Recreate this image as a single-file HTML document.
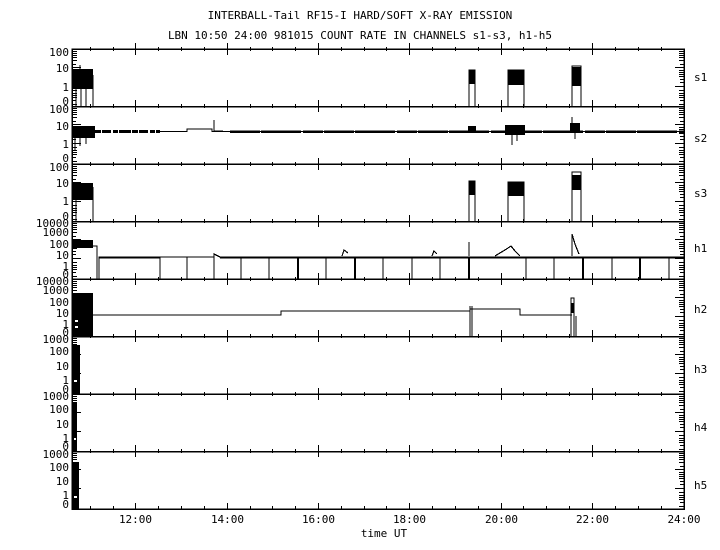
<!DOCTYPE html>
<html><head><style>
html,body{margin:0;padding:0;background:#fff;width:720px;height:550px;overflow:hidden}
svg text{font-family:"DejaVu Sans Mono","Liberation Mono",monospace;font-size:11px;fill:#000}
svg g, svg rect, svg path, svg line{shape-rendering:crispEdges}
</style></head><body>
<svg width="720" height="550" viewBox="0 0 720 550" xmlns="http://www.w3.org/2000/svg">
<text x="360" y="19" text-anchor="middle">INTERBALL-Tail RF15-I HARD/SOFT X-RAY EMISSION</text>
<text x="360" y="39" text-anchor="middle">LBN 10:50 24:00 981015  COUNT RATE IN CHANNELS s1-s3, h1-h5</text>
<g stroke="#000" fill="none" stroke-width="1.5">
<rect x="72" y="49" width="612" height="460"/>
<line x1="72" y1="106.5" x2="684" y2="106.5"/>
<line x1="72" y1="164" x2="684" y2="164"/>
<line x1="72" y1="221.5" x2="684" y2="221.5"/>
<line x1="72" y1="279" x2="684" y2="279"/>
<line x1="72" y1="336.5" x2="684" y2="336.5"/>
<line x1="72" y1="394" x2="684" y2="394"/>
<line x1="72" y1="451.5" x2="684" y2="451.5"/>
</g>
<g stroke="#000" stroke-width="1">
<path d="M135.5 43v12M227.5 43v12M318.5 43v12M409.5 43v12M501.5 43v12M592.5 43v12
M135.5 100v12M227.5 100v12M318.5 100v12M409.5 100v12M501.5 100v12M592.5 100v12
M135.5 158v12M227.5 158v12M318.5 158v12M409.5 158v12M501.5 158v12M592.5 158v12
M135.5 215v12M227.5 215v12M318.5 215v12M409.5 215v12M501.5 215v12M592.5 215v12
M135.5 273v12M227.5 273v12M318.5 273v12M409.5 273v12M501.5 273v12M592.5 273v12
M135.5 330v12M227.5 330v12M318.5 330v12M409.5 330v12M501.5 330v12M592.5 330v12
M135.5 388v12M227.5 388v12M318.5 388v12M409.5 388v12M501.5 388v12M592.5 388v12
M135.5 445v12M227.5 445v12M318.5 445v12M409.5 445v12M501.5 445v12M592.5 445v12
M135.5 503v6M227.5 503v6M318.5 503v6M409.5 503v6M501.5 503v6M592.5 503v6"/>
</g>
<defs>
<path id="mn" d="M90.5 47v4M113.5 47v4M158.5 47v4M181.5 47v4M204.5 47v4M250.5 47v4M272.5 47v4M295.5 47v4M341.5 47v4M364.5 47v4M386.5 47v4M432.5 47v4M455.5 47v4M478.5 47v4M523.5 47v4M546.5 47v4M569.5 47v4M615.5 47v4M638.5 47v4M661.5 47v4" stroke="#000" stroke-width="1"/>
<g id="lt" stroke="#000" stroke-width="1">
<path d="M72 51.5h5M72 53.5h5M72 55.5h5M72 57.5h5M72 60.5h5M72 64.5h4M72 67.5h9M72 70.5h5M72 72.5h5M72 74.5h5M72 76.5h5M72 79.5h4M72 82.5h4M72 86.5h9M72 90.5h5M72 93.5h5M72 95.5h5M72 97.5h5M72 100.5h4M72 104.5h5"/>
</g>
</defs>
<use href="#mn"/><use href="#mn" y="57"/><use href="#mn" y="115"/><use href="#mn" y="172"/><use href="#mn" y="230"/><use href="#mn" y="287"/><use href="#mn" y="345"/><use href="#mn" y="402"/><use href="#mn" y="459"/>
<use href="#lt"/><use href="#lt" y="57"/><use href="#lt" y="115"/><use href="#lt" y="172"/><use href="#lt" y="230"/><use href="#lt" y="287"/><use href="#lt" y="345"/><use href="#lt" y="402"/>
<g transform="translate(756,0) scale(-1,1)">
<use href="#lt"/><use href="#lt" y="57"/><use href="#lt" y="115"/><use href="#lt" y="172"/><use href="#lt" y="230"/><use href="#lt" y="287"/><use href="#lt" y="345"/><use href="#lt" y="402"/>
</g>
<g text-anchor="end">
<text x="69" y="56">100</text><text x="69" y="72">10</text><text x="69" y="91">1</text><text x="69" y="105">0</text>
<text x="69" y="113">100</text><text x="69" y="130">10</text><text x="69" y="148">1</text><text x="69" y="162">0</text>
<text x="69" y="171">100</text><text x="69" y="187">10</text><text x="69" y="205">1</text><text x="69" y="220">0</text>
<text x="69" y="227">10000</text><text x="69" y="236">1000</text><text x="69" y="248">100</text><text x="69" y="259">10</text><text x="69" y="270">1</text><text x="69" y="278">0</text>
<text x="69" y="285">10000</text><text x="69" y="294">1000</text><text x="69" y="306">100</text><text x="69" y="317">10</text><text x="69" y="328">1</text><text x="69" y="336">0</text>
<text x="69" y="343">1000</text><text x="69" y="355">100</text><text x="69" y="370">10</text><text x="69" y="384">1</text><text x="69" y="393">0</text>
<text x="69" y="400">1000</text><text x="69" y="413">100</text><text x="69" y="428">10</text><text x="69" y="442">1</text><text x="69" y="450">0</text>
<text x="69" y="458">1000</text><text x="69" y="471">100</text><text x="69" y="485">10</text><text x="69" y="499">1</text><text x="69" y="508">0</text>
</g>
<g>
<text x="694" y="81">s1</text><text x="694" y="142">s2</text><text x="694" y="197">s3</text><text x="694" y="252">h1</text>
<text x="694" y="313">h2</text><text x="694" y="373">h3</text><text x="694" y="431">h4</text><text x="694" y="489">h5</text>
</g>
<g text-anchor="middle">
<text x="135.5" y="523">12:00</text><text x="227.5" y="523">14:00</text><text x="318.5" y="523">16:00</text>
<text x="409.5" y="523">18:00</text><text x="501.5" y="523">20:00</text><text x="592.5" y="523">22:00</text><text x="684" y="523">24:00</text>
<text x="384" y="537">time UT</text>
</g>
<g fill="#000" stroke="#000" stroke-width="1.2">
<rect x="73" y="69" width="20" height="20" stroke="none"/>
<path d="M76 89v17M81 89v17M86 89v17M93 75v31M80 69v-4" fill="none"/>
<path d="M469 106v-36h6v36" fill="none"/><rect x="469" y="70" width="6" height="14" stroke="none"/>
<path d="M508 106v-36h16v36" fill="none"/><rect x="508" y="70" width="16" height="15" stroke="none"/>
<path d="M572 106v-40h9v40" fill="none"/><rect x="572" y="67" width="9" height="19" stroke="none"/>
<rect x="73" y="126" width="22" height="12" stroke="none"/>
<path d="M75 138v12M80 138v8M86 136v8" fill="none"/>
<path d="M95 131.5H160" stroke-width="3" stroke-dasharray="6 1 9 2 5 1 12 1" fill="none"/>
<path d="M160 131.5H187V129H212V131.5H684" fill="none"/>
<path d="M214 131V120M214 131h9" fill="none"/>
<path d="M230 131.5H684" stroke-width="2.5" stroke-dasharray="30 1 40 2 20 1" fill="none"/>
<rect x="468" y="126" width="8" height="6" stroke="none"/>
<rect x="505" y="125" width="20" height="10" stroke="none"/>
<path d="M512 135v10M517 135v6M572 125v-8M575 131v8" fill="none"/>
<rect x="570" y="123" width="10" height="10" stroke="none"/>
<rect x="73" y="183" width="20" height="17" stroke="none"/>
<path d="M76 200v21M93 187v34" fill="none"/>
<path d="M469 221v-40h6v40" fill="none"/><rect x="469" y="181" width="6" height="14" stroke="none"/>
<path d="M508 221v-39h16v39" fill="none"/><rect x="508" y="182" width="16" height="14" stroke="none"/>
<path d="M572 221v-49h9v49" fill="none"/><rect x="572" y="175" width="9" height="15" stroke="none"/>
<rect x="73" y="240" width="20" height="8" stroke="none"/>
<path d="M93 246h4v33M99 279v-22h61v22M160 257h27v22M187 257h27v-3M214 279v-25l6 3H684" fill="none"/>
<path d="M99 257.5H160M220 257.5H684" stroke-width="2" fill="none"/>
<path d="M241 279v-22M269 279v-22M326 279v-22M383 279v-22M412 279v-22M440 279v-22M526 279v-22M554 279v-22M612 279v-22M669 279v-22" fill="none"/>
<path d="M298 279v-22M355 279v-22M469 279v-22M583 279v-22M640 279v-22" stroke-width="2" fill="none"/>
<path d="M342 256l2-6 4 3M432 256l2-5 3 3M469 256v-14M495 256l10-6 6-4 4 5 5 5M572 256v-22l3 10 4 10" fill="none"/>
<rect x="73" y="293" width="20" height="43" stroke="none"/>
<path d="M93 315H281V311H470V309H520V315H572" fill="none"/>
<path d="M470 336v-30M472 336v-30" fill="none"/>
<path d="M571 336v-38h3v38M576 336v-20" fill="none"/>
<rect x="571" y="303" width="3" height="10" stroke="none"/>
<rect x="73" y="345" width="7" height="49" stroke="none"/>
<rect x="73" y="403" width="4" height="48" stroke="none"/>
<rect x="73" y="462" width="6" height="47" stroke="none"/>
</g>
<g fill="#fff">
<rect x="77" y="92" width="2" height="3"/><rect x="77" y="205" width="2" height="3"/>
<rect x="75" y="320" width="3" height="2"/><rect x="75" y="326" width="3" height="2"/>
<rect x="74" y="380" width="3" height="2"/><rect x="74" y="438" width="2" height="2"/><rect x="74" y="496" width="3" height="2"/>
</g>
</svg>
</body></html>
